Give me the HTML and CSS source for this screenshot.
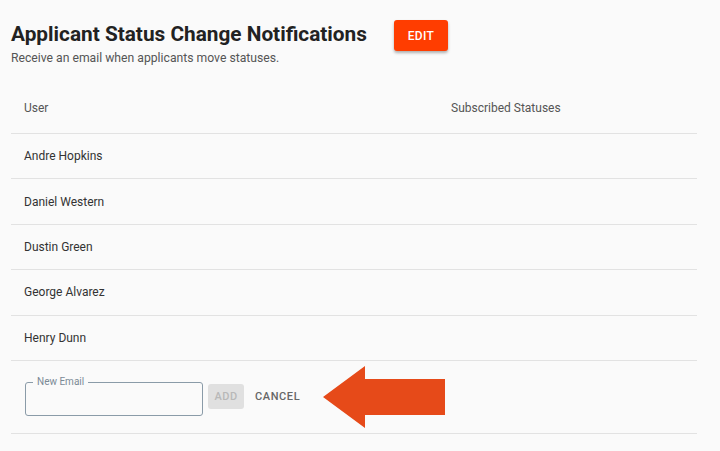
FILE: index.html
```html
<!DOCTYPE html>
<html>
<head>
<meta charset="utf-8">
<link rel="stylesheet" href="styles.css">
</head>
<body>
<div class="page">
  <div class="head">
    <h1 class="title">Applicant Status Change Notifications</h1>
    <button class="edit">EDIT</button>
  </div>
  <p class="sub">Receive an email when applicants move statuses.</p>
  <div class="table">
    <div class="row hdr"><span class="c1">User</span><span class="c2">Subscribed Statuses</span></div>
    <div class="row"><span class="c1">Andre Hopkins</span></div>
    <div class="row"><span class="c1">Daniel Western</span></div>
    <div class="row"><span class="c1">Dustin Green</span></div>
    <div class="row"><span class="c1">George Alvarez</span></div>
    <div class="row"><span class="c1">Henry Dunn</span></div>
    <div class="row form">
      <div class="field"><span class="lbl">New Email</span></div>
      <button class="add">ADD</button>
      <button class="cancel">CANCEL</button>
      <svg class="arrow" width="124" height="64" viewBox="0 0 124 64"><polygon points="0,31 42,0 42,13 122,13 122,49 42,49 42,62" fill="#e64a19"/></svg>
    </div>
  </div>
</div>
</body>
</html>
```
FILE: styles.css
```css
html, body { margin: 0; padding: 0; background: #fafafa; }
body { font-family: Roboto, "Noto Sans", sans-serif; color: #333; }
.page { padding: 20px 24px 0 11px; }
.head { display: flex; align-items: center; height: 31px; }
.title { margin: 0 0 3px; font-size: 20.8px; font-weight: 700; color: #222; }
.edit { margin-left: 27px; width: 54px; height: 31px; border: none; border-radius: 3px; background: #ff3d00; color: #fff; font-family: Roboto, sans-serif; font-size: 12px; font-weight: 500; letter-spacing: 0.3px; box-shadow: 0 2px 3px rgba(0,0,0,0.3); padding: 0; }
.sub { margin: 0; font-size: 12.2px; color: #555; }
.table { margin-top: 21px; width: 686px; }
.row { box-sizing: border-box; display: flex; align-items: center; height: 45.4px; border-bottom: 1px solid #e2e2e2; font-size: 12px; color: #333; }
.row.hdr { height: 48px; padding-bottom: 4px; color: #555; }
.c1 { padding-left: 13px; width: 427px; }
.row.form { height: 73px; position: relative; }
.field { margin-left: 14px; width: 176px; height: 32px; border: 1px solid #8a9ba8; border-radius: 3px; position: relative; margin-top: 4px; }
.lbl { position: absolute; top: -7px; left: 7px; padding: 0 4px; background: #fafafa; font-size: 10px; color: #7a8a96; line-height: 12px; }
.add { margin-left: 5px; width: 36px; height: 25px; border: none; border-radius: 3px; background: #e0e0e0; color: #b8b8b8; font-family: Roboto, sans-serif; font-size: 11px; font-weight: 500; letter-spacing: 0.5px; padding: 0; margin-top: 0; }
.cancel { margin-left: 5px; background: none; border: none; color: #666; font-family: Roboto, sans-serif; font-size: 11px; font-weight: 500; letter-spacing: 0.6px; padding: 0 6px; margin-top: 0; }
.arrow { position: absolute; left: 312px; top: 5px; }
```
